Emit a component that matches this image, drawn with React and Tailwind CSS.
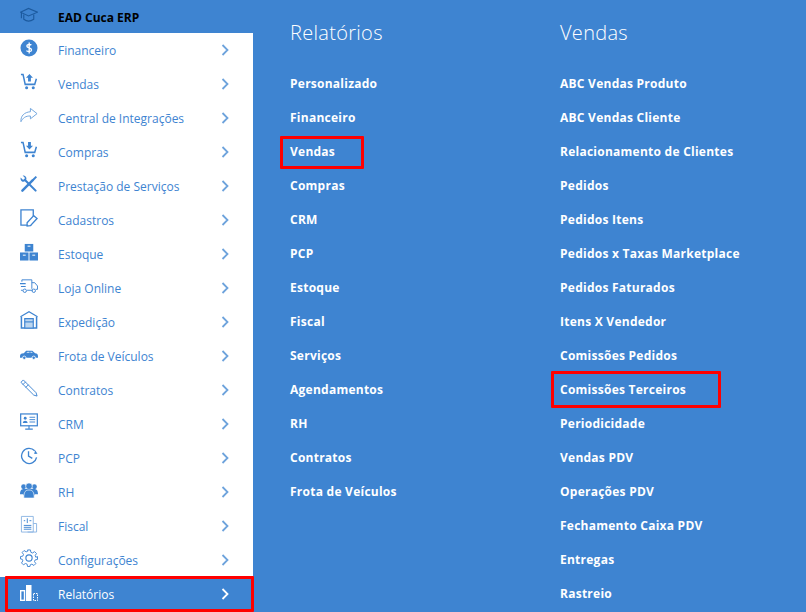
const Svg = ({ children }) => (
  <svg width="18" height="18" viewBox="0 0 19 19" fill="none" stroke="#3e84d1" strokeWidth="1.2">
    {children}
  </svg>
);

const Cart = ({ down }) => (
  <Svg>
    <path d="M1 1.500h2.200l2.300 10.500h10l1.800-6" strokeWidth="1.600" />
    <circle cx="7" cy="15.500" r="1.600" fill="#3e84d1" stroke="none" />
    <circle cx="14" cy="15.500" r="1.600" fill="#3e84d1" stroke="none" />
    {down ? (
      <path d="M8.500 1h3v4h2.200l-3.700 4-3.700-4h2.200z" fill="#3e84d1" stroke="none" />
    ) : (
      <path d="M10 1l3.700 4h-2.200v4h-3V5H6.300z" fill="#3e84d1" stroke="none" />
    )}
  </Svg>
);

const icons = {
  cap: (
    <svg width="18" height="18" viewBox="0 0 19 19" fill="none" stroke="#1c5a9e" strokeWidth="1.200">
      <path d="M.5 6.500L9 2.500l9.500 4-9.500 4z" />
      <path d="M4 9v5c3 2.500 7 2.500 10.500 0V9" />
      <path d="M1.500 7v6" />
    </svg>
  ),
  money: (
    <Svg>
      <circle cx="9.500" cy="9.500" r="9" fill="#3e84d1" stroke="none" />
      <path d="M12 6.500c-.8-1-4.800-1.200-4.800 1 0 2.300 5 1.500 5 4 0 2.200-4.300 2-5.400.8M9.700 3.800v11.400" stroke="#fff" strokeWidth="1.400" />
    </Svg>
  ),
  cartUp: <Cart />,
  cartDown: <Cart down />,
  share: (
    <Svg>
      <path d="M11 1.500l7 5.500-7 5.500V9.500C6 9.300 3 11.500 1 15.500c-.5-6 3.500-10 10-10.500z" strokeWidth="1" stroke="#6ea3dc" />
    </Svg>
  ),
  tools: (
    <Svg>
      <path d="M2.500 16.500L13.500 5.500" strokeWidth="2.600" strokeLinecap="round" />
      <path d="M13 4.500l3.500-3.500 1.500 1.500-3.500 3.500z" fill="#3e84d1" stroke="none" />
      <path d="M5 5l11.500 11.500" strokeWidth="2.200" strokeLinecap="round" />
      <path d="M.7 2.700L3 5l2-.1.100-2L2.800.5C4.800 0 7 1.500 6.800 4c-.2 2-2.300 3.500-4.200 3C1 6.600.2 4.500.7 2.700z" fill="#3e84d1" stroke="none" />
    </Svg>
  ),
  edit: (
    <Svg>
      <path d="M12 17H1V1h13v7" strokeWidth="1.400" />
      <path d="M7.500 14.500l7-7.500 3.500 3-7 7.500-3.500.5z" fill="#fff" strokeWidth="1.400" />
    </Svg>
  ),
  boxes: (
    <Svg>
      <rect x="5" y="1" width="9" height="8" fill="#3e84d1" stroke="none" />
      <rect x="0" y="10" width="9" height="8.500" fill="#3e84d1" stroke="none" />
      <rect x="10" y="10" width="9" height="8.500" fill="#3e84d1" stroke="none" />
      <path d="M8 3.500h3M3 13h3M13 13h3" stroke="#bcd6f0" strokeWidth="1.500" />
    </Svg>
  ),
  truck: (
    <Svg>
      <path d="M2 5V3h10.500v9.500M12.500 6h3l3 3.500v3.500h-2M7.500 14h6M1 14h2" strokeWidth="1" />
      <path d="M0 7h6M1 10h5" strokeWidth="1.200" />
      <circle cx="5" cy="14.500" r="1.800" strokeWidth="1" />
      <circle cx="14.500" cy="14.500" r="1.800" strokeWidth="1" />
    </Svg>
  ),
  garage: (
    <Svg>
      <path d="M.5 6L9.500.7l9 5.300" strokeWidth="1.200" />
      <path d="M1.500 6v12h16V6" strokeWidth="1.600" />
      <path d="M5 8h9v10H5z" fill="#bcd6f0" strokeWidth="1.200" />
      <path d="M5 11.500h9" strokeWidth="1.200" />
    </Svg>
  ),
  car: (
    <Svg>
      <path d="M0 12c0-2.500 1-3 4-3.300L6.500 6h6.500l3 2.800c2 .3 3 1 3 3.200v1.500H0z" fill="#3e84d1" stroke="none" />
      <circle cx="4.500" cy="13.500" r="1.800" fill="#3e84d1" stroke="#fff" strokeWidth=".8" />
      <circle cx="14.500" cy="13.500" r="1.800" fill="#3e84d1" stroke="#fff" strokeWidth=".8" />
      <path d="M7 8l1-1h2v1.500H7zM11 7h1.500l1 1.500H11z" fill="#bcd6f0" stroke="none" />
    </Svg>
  ),
  pen: (
    <Svg>
      <path d="M1 3.500L3.500 1 17 14.500l1 3.500-3.500-1z" strokeWidth="1" />
      <path d="M3 6l3-3M6 9l3-3" strokeWidth="1" />
    </Svg>
  ),
  crm: (
    <Svg>
      <rect x=".7" y="1" width="17.600" height="12.500" strokeWidth="1.300" />
      <circle cx="5.500" cy="5.500" r="1.500" fill="#3e84d1" stroke="none" />
      <path d="M3 10.500c0-3 5-3 5 0z" fill="#3e84d1" stroke="none" />
      <path d="M10 4.500h6M10 7h6M10 9.500h6" strokeWidth="1" />
      <path d="M9.500 13.500v3M5.500 17h8" strokeWidth="1.200" />
    </Svg>
  ),
  clock: (
    <Svg>
      <path d="M17.500 11A8 8 0 1 1 15.500 4" strokeWidth="1.400" />
      <path d="M9 4.500v5.200l4 2.300" strokeWidth="1.400" />
      <path d="M15 7.500l3.500-.5L16 3.500z" fill="#3e84d1" stroke="none" />
    </Svg>
  ),
  users: (
    <Svg>
      <circle cx="3.800" cy="6" r="2.600" fill="#3e84d1" stroke="none" />
      <circle cx="15.200" cy="6" r="2.600" fill="#3e84d1" stroke="none" />
      <circle cx="9.500" cy="5.500" r="3.500" fill="#3e84d1" stroke="#fff" strokeWidth=".7" />
      <path d="M0 14c0-5 2.500-5.500 4-5.500h11c2 0 4 .8 4 5.500h-3.500v1H3.500v-1z" fill="#3e84d1" stroke="none" />
      <path d="M4 18c0-7 2-8.500 5.500-8.500S15 11 15 18z" fill="#3e84d1" stroke="#fff" strokeWidth=".7" />
    </Svg>
  ),
  invoice: (
    <Svg>
      <path d="M1.500 1.500h12.500v16.500H1.500z" strokeWidth="1" stroke="#8db6e3" />
      <path d="M14 9h3.500v9H8" strokeWidth="1" stroke="#8db6e3" />
      <path d="M7.700 3.500v5M4 6h1.500M10 6h2M4 11h8M4 13h8M4 15h8" strokeWidth="1" />
    </Svg>
  ),
  gear: (
    <Svg>
      <circle cx="9.500" cy="9.500" r="3.300" strokeWidth="1.200" />
      <path
        d="M8 1h3l.5 2.500 1.700.7 2.200-1.400 2 2-1.400 2.200.7 1.700L18.500 8v3l-2.500.5-.7 1.700 1.400 2.200-2 2-2.200-1.400-1.700.7L10.500 18.500H8l-.5-2.500-1.700-.7-2.200 1.400-2-2L3 12.500l-.7-1.700L.5 10.500V8L3 7.500l.7-1.700-1.400-2.200 2-2 2.200 1.400 1.700-.7z"
        strokeWidth="1"
      />
    </Svg>
  ),
  bars: (
    <svg width="18" height="18" viewBox="0 0 18 18" fill="none" stroke="#fff">
      <rect x=".7" y="7.700" width="3.800" height="9.600" strokeWidth="1.400" />
      <rect x="6" y="2" width="5.500" height="16" fill="#fff" stroke="none" />
      <rect x="13.500" y="10.500" width="4" height="7" strokeWidth="1" strokeDasharray="1.500 1" />
    </svg>
  ),
};

const menu = [
  ["Financeiro", "money"],
  ["Vendas", "cartUp"],
  ["Central de Integrações", "share"],
  ["Compras", "cartDown"],
  ["Prestação de Serviços", "tools"],
  ["Cadastros", "edit"],
  ["Estoque", "boxes"],
  ["Loja Online", "truck"],
  ["Expedição", "garage"],
  ["Frota de Veículos", "car"],
  ["Contratos", "pen"],
  ["CRM", "crm"],
  ["PCP", "clock"],
  ["RH", "users"],
  ["Fiscal", "invoice"],
  ["Configurações", "gear"],
];

const relatorios = [
  "Personalizado", "Financeiro", "Vendas", "Compras", "CRM", "PCP", "Estoque",
  "Fiscal", "Serviços", "Agendamentos", "RH", "Contratos", "Frota de Veículos",
];

const vendas = [
  "ABC Vendas Produto", "ABC Vendas Cliente", "Relacionamento de Clientes", "Pedidos",
  "Pedidos Itens", "Pedidos x Taxas Marketplace", "Pedidos Faturados", "Itens X Vendedor",
  "Comissões Pedidos", "Comissões Terceiros", "Periodicidade", "Vendas PDV", "Operações PDV",
  "Fechamento Caixa PDV", "Entregas", "Rastreio",
];

function Chevron({ active }) {
  return (
    <svg width="8" height="12" viewBox="0 0 8 12" fill="none" strokeWidth="1.800" className={`mr-[24px] flex-none ${active ? "stroke-white" : "stroke-[#6ea3dc]"}`}>
      <path d="M1.500 1l5 5-5 5" />
    </svg>
  );
}

function MenuRow({ label, icon, active }) {
  return (
    <div className={`flex h-[34px] items-center pl-5 ${active ? "text-white" : "bg-white text-[#3e84d1]"}`}>
      <div className="relative -top-[2px] w-[38px] flex-none">{icons[icon]}</div>
      <span className="relative top-px flex-1 text-[12px]">{label}</span>
      <Chevron active={active} />
    </div>
  );
}

function Column({ title, items, marked, boxClass }) {
  return (
    <div className="w-[270px] flex-none">
      <h2 className="flex h-[66px] items-start pt-[19px] text-[20px] leading-[28px] font-light tracking-[0.3px] text-white">{title}</h2>
      {items.map((item) => (
        <div key={item} className="relative flex h-[34px] items-center text-[12px] font-bold tracking-[0.25px] text-white">
          <span className="relative top-px">{item}</span>
          {item === marked && <div className={`absolute rounded-[1px] border-[3px] border-[#ff0000] ${boxClass}`} />}
        </div>
      ))}
    </div>
  );
}

export default function App() {
  return (
    <div className="flex h-[612px] w-[806px] overflow-hidden bg-[#3e84d1] font-['Open_Sans','Noto_Sans',sans-serif]">
      <aside className="w-[253px] flex-none">
        <div className="flex h-[33px] items-center pl-5">
          <div className="relative -top-[2px] w-[38px] flex-none">{icons.cap}</div>
          <span className="relative top-px text-[12px] font-bold text-black">EAD Cuca ERP</span>
        </div>
        {menu.map(([label, icon]) => (
          <MenuRow key={label} label={label} icon={icon} />
        ))}
        <div className="relative">
          <MenuRow label="Relatórios" icon="bars" active />
          <div className="absolute -top-px left-[5px] -right-px h-[36px] rounded-[1px] border-[3px] border-[#ff0000]" />
        </div>
      </aside>
      <main className="flex flex-1 pl-[37px]">
        <Column title="Relatórios" items={relatorios} marked="Vendas" boxClass="-left-[10px] top-[2px] h-[33px] w-[84px]" />
        <Column title="Vendas" items={vendas} marked="Comissões Terceiros" boxClass="-left-[9px] -top-px h-[37px] w-[170px]" />
      </main>
    </div>
  );
}
